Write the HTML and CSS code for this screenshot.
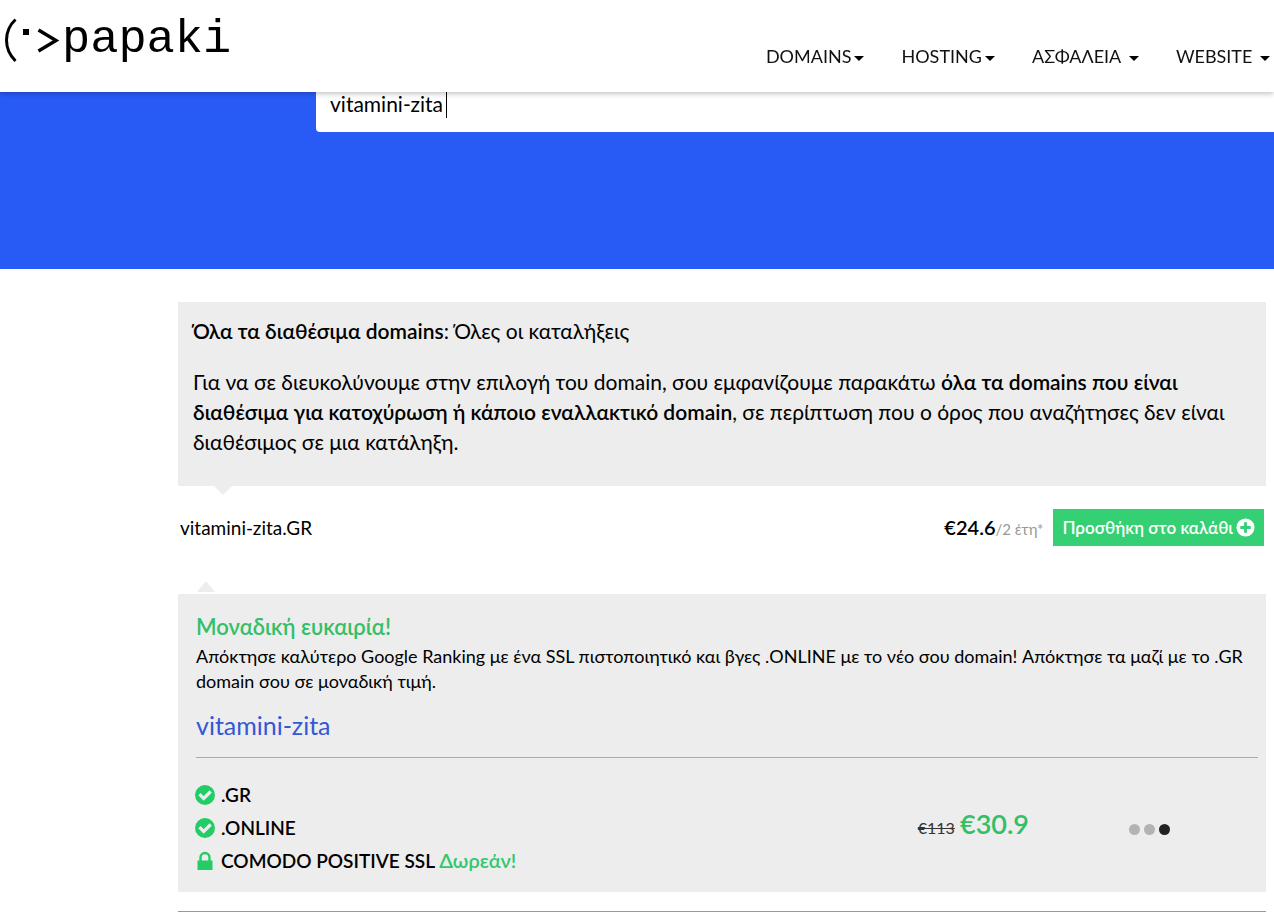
FILE: index.html
```html
<!DOCTYPE html>
<html lang="el">
<head>
<meta charset="utf-8">
<meta name="viewport" content="width=device-width, initial-scale=1">
<title>papaki</title>
<link rel="stylesheet" href="styles.css">
</head>
<body>
<svg class="sprite" aria-hidden="true">
  <symbol id="check" viewBox="0 0 20 20"><circle cx="10" cy="10" r="10" fill="#2c6"/><path d="M4.400 9.200l4.300 4.300 7-7" fill="none" stroke="#ededed" stroke-width="3.200"/></symbol>
</svg>
<header class="topbar">
  <a class="logo" href="#">
    <svg class="logo-face" viewBox="0 0 60 46" aria-hidden="true">
      <path d="M13.500 1.500Q4.500 10 4.500 22T13.500 43" fill="none" stroke="#000" stroke-width="3"/>
      <path d="M21 11h6v6h-6z"/>
      <path d="M36.500 12L54 22.500 36.500 33" fill="none" stroke="#000" stroke-width="3.400"/>
    </svg>
    <span class="logo-name">papaki</span>
  </a>
  <nav class="menu">
    <a href="#">DOMAINS<i class="arrow"></i></a>
    <a href="#">HOSTING<i class="arrow"></i></a>
    <a href="#">ΑΣΦΑΛΕΙΑ <i class="arrow"></i></a>
    <a href="#">WEBSITE <i class="arrow"></i></a>
  </nav>
</header>
<section class="hero">
  <div class="search">
    <input class="search-input" type="text" value="vitamini-zita" aria-label="Domain">
    <span class="caret"></span>
  </div>
</section>
<main class="results">
  <section class="info">
    <p><b>Όλα τα διαθέσιμα domains</b>: Όλες οι καταλήξεις</p>
    <p>Για να σε διευκολύνουμε στην επιλογή του domain, σου εμφανίζουμε παρακάτω <b>όλα τα domains που είναι διαθέσιμα για κατοχύρωση ή κάποιο εναλλακτικό domain</b>, σε περίπτωση που ο όρος που αναζήτησες δεν είναι διαθέσιμος σε μια κατάληξη.</p>
  </section>
  <section class="domain-row">
    <span class="domain-name">vitamini-zita.GR</span>
    <span class="price"><b>€24.6</b><small>/2 έτη*</small></span>
    <button class="add" type="button">Προσθήκη στο καλάθι
      <svg viewBox="0 0 20 20" aria-hidden="true"><circle cx="10" cy="10" r="9.500" fill="#fff"/><path d="M10 4.500v11M4.500 10h11" stroke="#35d073" stroke-width="3"/></svg>
    </button>
  </section>
  <section class="offer">
    <h2>Μοναδική ευκαιρία!</h2>
    <p class="offer-text">Απόκτησε καλύτερο Google Ranking με ένα SSL πιστοποιητικό και βγες .ONLINE με το νέο σου domain! Απόκτησε τα μαζί με το .GR domain σου σε μοναδική τιμή.</p>
    <h3>vitamini-zita</h3>
    <div class="bundle">
      <ul>
        <li><svg viewBox="0 0 20 20" aria-hidden="true"><use href="#check"/></svg>.GR</li>
        <li><svg viewBox="0 0 20 20" aria-hidden="true"><use href="#check"/></svg>.ONLINE</li>
        <li><svg viewBox="0 0 20 20" aria-hidden="true"><path d="M2.500 9.500h15V19h-15z" fill="#2c6"/><path d="M5.500 10V6.500a4.500 4.500 0 0 1 9 0V10" fill="none" stroke="#2c6" stroke-width="2.400"/></svg>COMODO POSITIVE SSL <em>Δωρεάν!</em></li>
      </ul>
      <div class="bundle-price"><s>€113</s> <strong>€30.9</strong></div>
      <div class="dots"><i></i><i></i><i class="on"></i></div>
    </div>
  </section>
  <hr class="end">
</main>
</body>
</html>
```
FILE: styles.css
```css
* { box-sizing: border-box; }
body {
  margin: 0;
  background: #fff;
  color: #000;
  font-family: Lato, "Noto Sans", sans-serif;
  font-size: 20px;
}
p, h2, h3, ul { margin: 0; padding: 0; }
b { font-weight: 600; }
.sprite { position: absolute; width: 0; height: 0; }

.topbar {
  position: fixed;
  top: 0;
  left: 0;
  right: 0;
  z-index: 2;
  height: 92px;
  padding: 0 4px 0 2px;
  display: flex;
  justify-content: space-between;
  background: #fff;
  box-shadow: 0 1px 6px rgba(0, 0, 0, .3);
}
.logo {
  display: flex;
  align-items: flex-start;
  padding-top: 18px;
  color: #000;
  text-decoration: none;
}
.logo-face { width: 60px; height: 46px; }
.logo-name {
  font-family: "Liberation Mono", monospace;
  font-size: 47px;
  line-height: 44px;
}
.menu { display: flex; gap: 37px; padding-top: 43px; }
.menu a {
  font-size: 18px;
  line-height: 26px;
  color: #111;
  text-decoration: none;
  white-space: nowrap;
}
.arrow {
  display: inline-block;
  margin-left: 3px;
  border: 5px solid transparent;
  border-top-color: #000;
  border-bottom: 0;
  vertical-align: 2px;
}

.hero { height: 269px; padding: 74px 0 0 316px; background: #285af6; }
.search { position: relative; }
.search-input {
  display: block;
  width: 100%;
  height: 58px;
  padding: 0 14px;
  border: 0;
  border-radius: 4px 0 0 4px;
  font: inherit;
  font-size: 21px;
  color: #000;
  background: #fff;
}
.caret { position: absolute; left: 130px; top: 18px; width: 1px; height: 26px; background: #000; }

.results { padding: 33px 8px 0 178px; }
.info {
  position: relative;
  padding: 14px 15px 29px;
  background: #ededed;
  font-size: 21px;
  line-height: 30px;
}
.info p + p { margin-top: 21px; }
.info::after, .offer::before {
  content: "";
  position: absolute;
  border: 9px solid transparent;
}
.info::after { top: 100%; left: 36px; border-top-color: #ededed; border-bottom: 0; }
.domain-row {
  display: flex;
  align-items: center;
  height: 108px;
  padding: 0 2px 25px;
  line-height: 24px;
}
.domain-name { flex: 1; font-size: 19px; }
.price { margin-right: 10px; font-size: 20px; }
.price small { font-size: 15px; color: #999; }
.add {
  display: flex;
  align-items: center;
  gap: 3px;
  height: 37px;
  padding: 0 9px;
  border: 0;
  background: #35d073;
  color: #fff;
  font: inherit;
  font-size: 17px;
  font-weight: 600;
}
.add svg { width: 19px; height: 19px; }

.offer {
  position: relative;
  padding: 20px 8px 15px 18px;
  background: #ededed;
}
.offer::before { bottom: calc(100% + 2px); left: 19px; border-bottom: 11px solid #ededed; border-top: 0; }
.offer h2 { font-size: 22px; line-height: 26px; font-weight: 600; color: #33bf68; }
.offer-text { margin-top: 4px; font-size: 18px; line-height: 25px; }
.offer h3 { margin-top: 12px; font-size: 25px; line-height: 38px; font-weight: 400; color: #3558d4; }
.bundle {
  display: flex;
  margin-top: 13px;
  padding-top: 20px;
  border-top: 1px solid #aaa;
}
.bundle ul { flex: 1; list-style: none; }
.bundle li {
  display: flex;
  align-items: center;
  line-height: 33px;
  font-size: 19px;
  font-weight: 600;
  white-space: pre;
}
.bundle li svg { width: 20px; height: 20px; margin: 0 6px 0 -1px; }
.bundle em { font-style: normal; font-size: 20px; color: #33c76c; }
.bundle-price { margin: 26px 100px 0 0; line-height: 40px; }
.bundle-price s { font-size: 16px; color: #333; }
.bundle-price strong { font-size: 27px; font-weight: 600; color: #33bf68; }
.dots { display: flex; gap: 4px; margin: 46px 88px 0 0; }
.dots i { width: 11px; height: 11px; border-radius: 50%; background: #b3b3b3; }
.dots .on { background: #222; }
.end { margin: 19px 0 0; border: 0; border-top: 1px solid #999; }
```
